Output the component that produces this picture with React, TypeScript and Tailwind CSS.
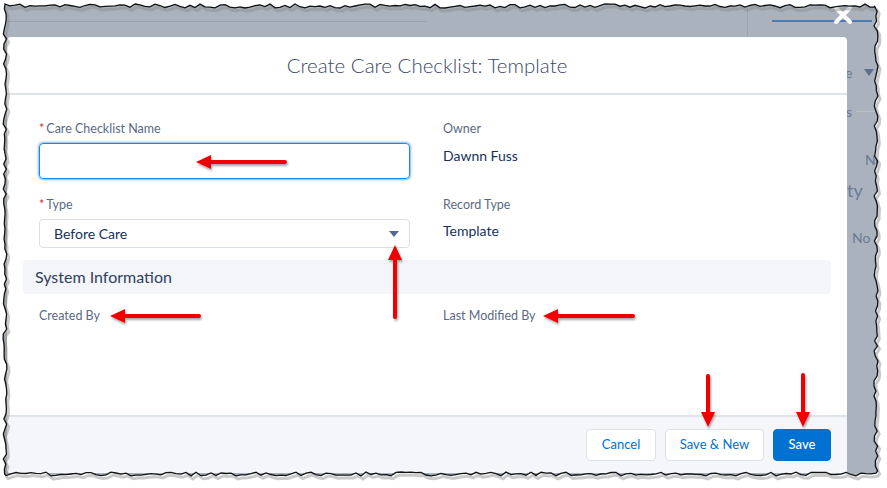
import React from "react";

const font = { fontFamily: "Lato, 'Open Sans', sans-serif" };

// torn-paper outline, fixed seed so it is stable between runs
function tornPoints() {
  let s = 11;
  const r = () => {
    s = (s * 16807) % 2147483647;
    return s / 2147483647 - 0.5;
  };
  const L = 5, T = 6, R = 876, B = 474;
  const pts: [number, number][] = [];
  for (let x = L; x < R; x += 5) pts.push([x, T + r() * 4]);
  for (let y = T; y < B; y += 5) pts.push([R + r() * 4, y]);
  for (let x = R; x > L; x -= 5) pts.push([x, B + r() * 4]);
  for (let y = B; y > T; y -= 5) pts.push([L + r() * 4, y]);
  return pts;
}

const torn = tornPoints();
const tornPath =
  "M" + torn.map(([x, y]) => `${x.toFixed(1)} ${y.toFixed(1)}`).join(" L") + " Z";

function TornEdge() {
  return (
    <svg
      className="pointer-events-none absolute left-0 top-0"
      width={887}
      height={488}
      viewBox="0 0 887 488"
    >
      <path d={`M0 0 H887 V488 H0 Z ${tornPath}`} fill="#ffffff" fillRule="evenodd" />
      <path
        d={tornPath}
        fill="none"
        stroke="#8a8a8a"
        strokeOpacity={0.45}
        strokeWidth={3}
        transform="translate(2 3)"
      />
      <path d={tornPath} fill="none" stroke="#111" strokeWidth={1.3} />
    </svg>
  );
}

type Arrow = { tip: [number, number]; tail: [number, number] };

const arrows: Arrow[] = [
  { tip: [196, 162], tail: [285, 162] },
  { tip: [110, 316], tail: [199, 316] },
  { tip: [543, 316], tail: [633, 316] },
  { tip: [395, 245], tail: [395, 317] },
  { tip: [708, 427], tail: [708, 376] },
  { tip: [803, 427], tail: [803, 375] },
];

function RedArrows() {
  return (
    <svg
      className="pointer-events-none absolute left-0 top-0"
      width={887}
      height={488}
      viewBox="0 0 887 488"
    >
      <defs>
        <filter id="sh" x="-20%" y="-20%" width="140%" height="140%">
          <feDropShadow dx="1" dy="2" stdDeviation="1.2" floodColor="#000" floodOpacity="0.35" />
        </filter>
      </defs>
      {arrows.map((a, i) => {
        const [tx, ty] = a.tip;
        const [sx, sy] = a.tail;
        const len = Math.hypot(tx - sx, ty - sy);
        const ux = (tx - sx) / len;
        const uy = (ty - sy) / len;
        const hl = 15;
        const hw = 7;
        const bx = tx - ux * hl;
        const by = ty - uy * hl;
        const px = -uy;
        const py = ux;
        return (
          <g key={i} filter="url(#sh)">
            <line x1={sx} y1={sy} x2={bx + ux * 2} y2={by + uy * 2} stroke="#f00000" strokeWidth={4} strokeLinecap="round" />
            <polygon
              points={`${tx},${ty} ${bx + px * hw},${by + py * hw} ${bx - px * hw},${by - py * hw}`}
              fill="#f00000"
            />
          </g>
        );
      })}
    </svg>
  );
}

function Label({ text, required }: { text: string; required?: boolean }) {
  return (
    <div className="h-[18px] text-[12.5px] leading-[18px] text-[#5a6a85]">
      {required && <span className="mr-[2px] text-[#c23934]">*</span>}
      {text}
    </div>
  );
}

function Btn({ children, w, primary }: { children: React.ReactNode; w: string; primary?: boolean }) {
  return (
    <button
      type="button"
      className={
        "h-[32px] rounded-[4px] text-[13px] " +
        w +
        (primary
          ? " bg-[#0070d2] font-medium text-white border border-[#0070d2]"
          : " bg-white text-[#0070d2] border border-[#dde1e8]")
      }
    >
      {children}
    </button>
  );
}

function Modal() {
  return (
    <div className="flex h-[436px] w-[840px] flex-col overflow-hidden rounded-[4px] bg-white">
      <div className="flex h-[58px] shrink-0 items-center justify-center border-b-2 border-[#dfe3ea]">
        <h2 className="text-[20.5px] font-light text-[#3b4a66]">
          Create Care Checklist: Template
        </h2>
      </div>

      <div className="flex-1 px-4 pt-[25px]">
        <div className="grid grid-cols-[404px_1fr] px-4">
          <div className="pr-[33px]">
            <Label text="Care Checklist Name" required />
            <div className="mt-[5px] h-[36px] rounded-[4px] border border-[#1589ee] shadow-[0_0_3px_#0070d2]" />
          </div>
          <div>
            <Label text="Owner" />
            <div className="mt-[8px] text-[14px] leading-[20px] text-[#16325c]">Dawnn Fuss</div>
          </div>
        </div>

        <div className="mt-[17px] grid grid-cols-[404px_1fr] px-4">
          <div className="pr-[33px]">
            <Label text="Type" required />
            <div className="mt-[5px] flex h-[29px] items-center justify-between rounded-[4px] border border-[#d8dde6] pl-[14px] pr-[10px]">
              <span className="text-[14px] text-[#16325c]">Before Care</span>
              <svg width="10" height="6" viewBox="0 0 10 6">
                <path d="M0 0 H10 L5 6 Z" fill="#54698d" />
              </svg>
            </div>
          </div>
          <div>
            <Label text="Record Type" />
            <div className="mt-[7px] text-[14px] leading-[20px] text-[#16325c]">Template</div>
          </div>
        </div>

        <div className="mt-[12px] flex h-[34px] items-center rounded-[4px] bg-[#f3f5f9] px-3">
          <span className="text-[16px] text-[#2f3f5c]">System Information</span>
        </div>

        <div className="mt-[13px] grid grid-cols-[404px_1fr] px-4">
          <Label text="Created By" />
          <Label text="Last Modified By" />
        </div>
      </div>

      <div className="flex h-[58px] shrink-0 items-center justify-end gap-[9px] border-t-2 border-[#dfe3ea] bg-[#f4f6f9] pr-[16px]">
        <Btn w="w-[70px]">Cancel</Btn>
        <Btn w="w-[99px]">Save &amp; New</Btn>
        <Btn w="w-[58px]" primary>
          Save
        </Btn>
      </div>
    </div>
  );
}

export default function App() {
  return (
    <div className="relative h-[488px] w-[887px] overflow-hidden bg-[#a9b2bd]" style={font}>
      {/* page behind the modal, cut off */}
      <div className="absolute left-[7px] top-[21px] h-px w-[420px] bg-[#97a2ae]" />
      <div className="absolute left-[747px] top-0 h-[37px] w-px bg-[#9aa5b1]" />
      <div className="absolute left-[772px] top-[20px] h-[2px] w-[100px] bg-[#4f7bb0]" />
      <svg className="absolute left-[833px] top-[5px]" width="20" height="20" viewBox="0 0 20 20">
        <path d="M3 3 L17 17 M17 3 L3 17" stroke="#fff" strokeWidth="4" strokeLinecap="round" />
      </svg>

      <div className="flex pt-[37px]">
        <div className="ml-[7px]">
          <Modal />
        </div>
        <div className="w-[30px] overflow-hidden whitespace-nowrap text-[14px] text-[#6a7a96]">
          <div className="mt-[25px] flex h-[20px] items-center">
            <span className="-ml-[2px]">e</span>
            <svg className="ml-[12px] shrink-0" width="10" height="7" viewBox="0 0 10 7">
              <path d="M0 0 H10 L5 7 Z" fill="#5d6f8e" />
            </svg>
          </div>
          <div className="mt-[19px] flex h-[20px] items-center">
            <span className="-ml-[1px]">s</span>
            <div className="ml-[4px] h-px flex-1 bg-[#b8c0ca]" />
          </div>
          <div className="mt-[29px] h-[20px] pl-[18px] leading-[20px]">No</div>
          <div className="mt-[10px] h-[20px] text-[18px] leading-[20px]">ty</div>
          <div className="mt-[28px] h-[20px] pl-[5px] leading-[20px]">No p</div>
        </div>
      </div>

      <RedArrows />
      <TornEdge />
    </div>
  );
}
